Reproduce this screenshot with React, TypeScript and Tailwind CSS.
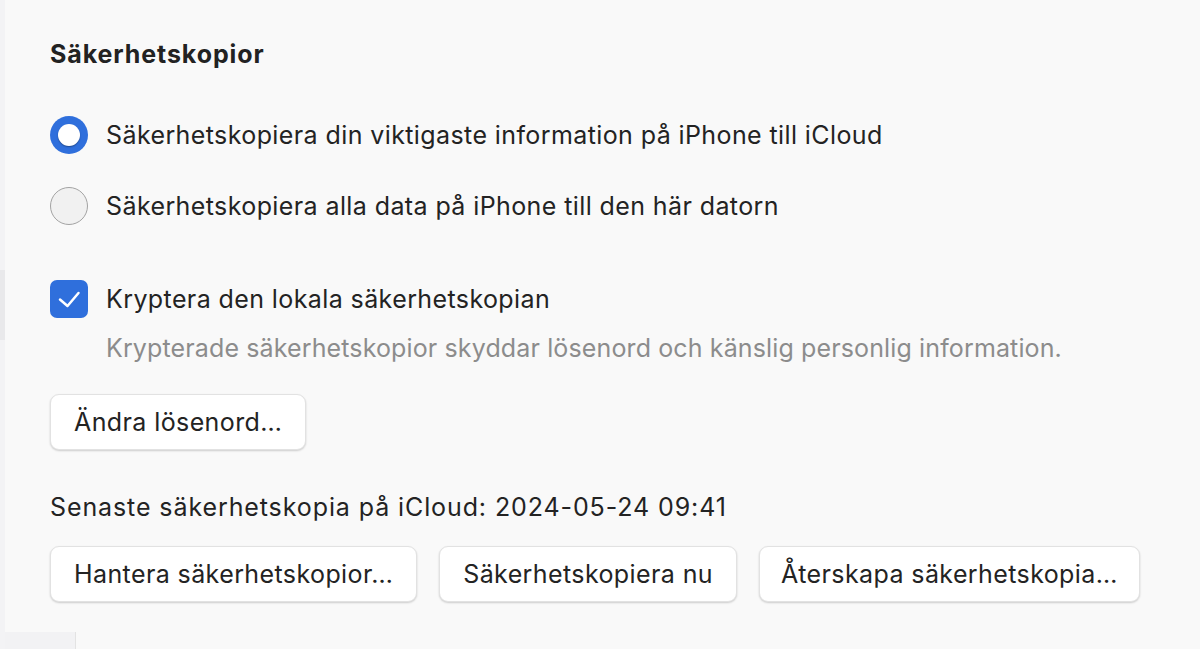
import React, { useState } from 'react';

const font = { fontFamily: 'Inter, "Noto Sans", sans-serif' };

function Radio({ checked, label, onClick }: { checked: boolean; label: string; onClick: () => void }) {
  return (
    <button onClick={onClick} className="flex h-[38px] items-center gap-[18px] text-left">
      {checked ? (
        <span className="flex h-[38px] w-[38px] items-center justify-center rounded-full bg-[#2f6fdc]">
          <span className="h-[22px] w-[22px] rounded-full bg-white shadow-[0_1px_1.5px_rgba(0,0,0,0.35)]" />
        </span>
      ) : (
        <span className="h-[38px] w-[38px] rounded-full border-[1.5px] border-[#a3a3a3] bg-[#f1f1f1]" />
      )}
      <span className="text-[25px] leading-[30px] tracking-[0.4px] text-[#232323]">{label}</span>
    </button>
  );
}

function PillButton({ children, pad = 'px-[23px]' }: { children: React.ReactNode; pad?: string }) {
  return (
    <button className={`h-[56px] rounded-[9px] border border-[#e2e2e2] bg-white ${pad} text-[25px] leading-[30px] tracking-[0.4px] text-[#232323] shadow-[0_1px_2px_rgba(0,0,0,0.18)]`}>
      {children}
    </button>
  );
}

export default function App() {
  const [choice, setChoice] = useState<'icloud' | 'local'>('icloud');
  const [encrypt, setEncrypt] = useState(true);

  return (
    <div className="flex h-[649px] w-[1200px] overflow-hidden bg-[#f9f9f9]" style={font}>
      <div className="flex w-[5px] flex-col bg-[#f3f3f5]">
        <div className="h-[270px]" />
        <div className="h-[70px] bg-[#e9e9eb]" />
      </div>
      <div className="flex flex-1 flex-col">
        <div className="flex flex-col pl-[45px] pt-[38px]">
          <h2 className="h-8 text-[25px] font-bold leading-8 tracking-[0.9px] text-[#222]">Säkerhetskopior</h2>

          <div className="mt-[46px]">
            <Radio
              checked={choice === 'icloud'}
              onClick={() => setChoice('icloud')}
              label="Säkerhetskopiera din viktigaste information på iPhone till iCloud"
            />
          </div>
          <div className="mt-[33px]">
            <Radio
              checked={choice === 'local'}
              onClick={() => setChoice('local')}
              label="Säkerhetskopiera alla data på iPhone till den här datorn"
            />
          </div>

          <button onClick={() => setEncrypt(!encrypt)} className="mt-[55px] flex h-[38px] items-center gap-[18px] text-left">
            <span className={`flex h-[38px] w-[38px] items-center justify-center rounded-[7px] ${encrypt ? 'bg-[#2f6fdc]' : 'border-[1.5px] border-[#a3a3a3] bg-[#f1f1f1]'}`}>
              {encrypt && (
                <svg viewBox="0 0 38 38" className="h-[38px] w-[38px]" fill="none" stroke="white" strokeWidth="2.5" strokeLinecap="round" strokeLinejoin="round">
                  <path d="M10 19.5 L17.5 26 L28.5 13" />
                </svg>
              )}
            </span>
            <span className="text-[25px] leading-[30px] tracking-[0.4px] text-[#232323]">Kryptera den lokala säkerhetskopian</span>
          </button>
          <p className="mt-[15px] pl-[56px] text-[25px] leading-[30px] tracking-[0.13px] text-[#8c8c8c]">
            Krypterade säkerhetskopior skyddar lösenord och känslig personlig information.
          </p>

          <div className="mt-[31px] flex">
            <PillButton>Ändra lösenord…</PillButton>
          </div>

          <p className="mt-[42px] text-[25px] leading-[30px] tracking-[0.9px] text-[#232323]">
            Senaste säkerhetskopia på iCloud: 2024-05-24 09:41
          </p>

          <div className="mt-[24px] flex gap-[22px]">
            <PillButton>Hantera säkerhetskopior…</PillButton>
            <PillButton>Säkerhetskopiera nu</PillButton>
            <PillButton pad="px-[21px]">Återskapa säkerhetskopia…</PillButton>
          </div>
        </div>
        <div className="mt-auto h-[17px] w-[71px] border-r border-[#e3e3e3] bg-[#f2f2f4]" />
      </div>
    </div>
  );
}
